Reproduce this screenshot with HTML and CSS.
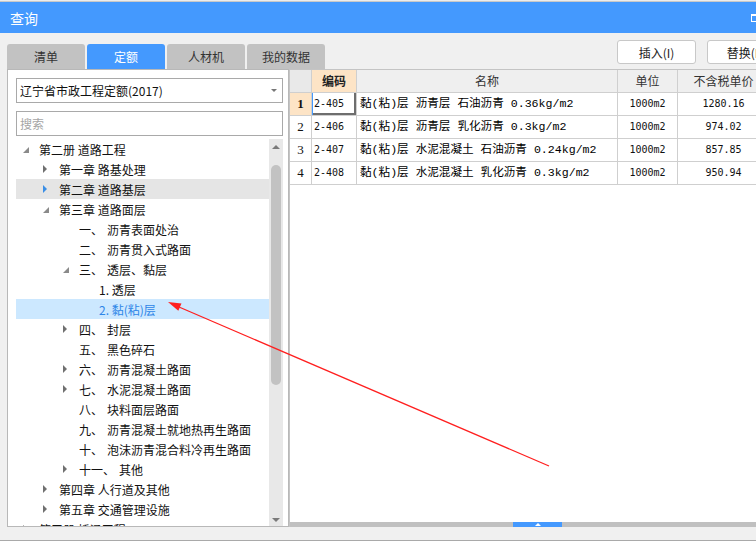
FILE: index.html
```html
<!DOCTYPE html>
<html lang="zh-CN">
<head>
<meta charset="utf-8">
<title>查询</title>
<link rel="stylesheet" href="styles.css">
</head>
<body>
<div class="app">
  <div class="topstrip"></div>
  <header class="titlebar"><span class="title">查询</span><span class="winbtn"></span></header>
  <div class="toprow">
    <nav class="tabs">
      <span class="tab">清单</span>
      <span class="tab active">定额</span>
      <span class="tab">人材机</span>
      <span class="tab">我的数据</span>
    </nav>
    <div class="toolbar">
      <button class="btn">插入(I)</button>
      <button class="btn">替换(R)</button>
    </div>
  </div>
  <div class="main">
    <aside class="panel">
      <div class="select"><span>辽宁省市政工程定额(2017)</span><span class="caret"></span></div>
      <div class="search">搜索</div>
      <div class="tree">
        <ul class="tree-list">
          <li class="node l0"><span class="tog open"></span>第二册 道路工程</li>
          <li class="node l1"><span class="tog closed"></span>第一章 路基处理</li>
          <li class="node l1 hover"><span class="tog closed"></span>第二章 道路基层</li>
          <li class="node l1"><span class="tog open"></span>第三章 道路面层</li>
          <li class="node l2"><span class="tog"></span><span class="num">一、</span>沥青表面处治</li>
          <li class="node l2"><span class="tog"></span><span class="num">二、</span>沥青贯入式路面</li>
          <li class="node l2"><span class="tog open"></span><span class="num">三、</span>透层、黏层</li>
          <li class="node l3"><span class="tog"></span>1. 透层</li>
          <li class="node l3 sel"><span class="tog"></span>2. 黏(粘)层</li>
          <li class="node l2"><span class="tog closed"></span><span class="num">四、</span>封层</li>
          <li class="node l2"><span class="tog"></span><span class="num">五、</span>黑色碎石</li>
          <li class="node l2"><span class="tog closed"></span><span class="num">六、</span>沥青混凝土路面</li>
          <li class="node l2"><span class="tog closed"></span><span class="num">七、</span>水泥混凝土路面</li>
          <li class="node l2"><span class="tog"></span><span class="num">八、</span>块料面层路面</li>
          <li class="node l2"><span class="tog"></span><span class="num">九、</span>沥青混凝土就地热再生路面</li>
          <li class="node l2"><span class="tog"></span><span class="num">十、</span>泡沫沥青混合料冷再生路面</li>
          <li class="node l2"><span class="tog closed"></span><span class="num">十一、</span>其他</li>
          <li class="node l1"><span class="tog closed"></span>第四章 人行道及其他</li>
          <li class="node l1"><span class="tog closed"></span>第五章 交通管理设施</li>
          <li class="node l0"><span class="tog closed"></span>第三册 桥涵工程</li>
        </ul>
        <div class="vscroll"><span class="arr up"></span><span class="thumb"></span><span class="arr down"></span></div>
      </div>
    </aside>
    <section class="gridpane">
      <div class="grid">
        <div class="gr head">
          <span></span><span class="key">编码</span><span>名称</span><span>单位</span><span>不含税单价</span>
        </div>
        <div class="gr">
          <span class="rn cur">1</span><span class="code focus">2-405</span><span class="name">黏(粘)层 沥青层 石油沥青 0.36kg/m2</span><span class="unit">1000m2</span><span class="price">1280.16</span>
        </div>
        <div class="gr">
          <span class="rn">2</span><span class="code">2-406</span><span class="name">黏(粘)层 沥青层 乳化沥青 0.3kg/m2</span><span class="unit">1000m2</span><span class="price">974.02</span>
        </div>
        <div class="gr">
          <span class="rn">3</span><span class="code">2-407</span><span class="name">黏(粘)层 水泥混凝土 石油沥青 0.24kg/m2</span><span class="unit">1000m2</span><span class="price">857.85</span>
        </div>
        <div class="gr">
          <span class="rn">4</span><span class="code">2-408</span><span class="name">黏(粘)层 水泥混凝土 乳化沥青 0.3kg/m2</span><span class="unit">1000m2</span><span class="price">950.94</span>
        </div>
      </div>
      <div class="spacer"></div>
      <div class="hscroll"><span class="grip"></span></div>
    </section>
  </div>
  <div class="footer"></div>
</div>
<svg class="annot" width="756" height="555" viewBox="0 0 756 555">
  <line x1="549" y1="466" x2="179" y2="307" stroke="#ff1f1f" stroke-width="1.2"/>
  <polygon points="168,302 178.3,310.8 181.5,303.4" fill="#ff1f1f"/>
</svg>
</body>
</html>
```

FILE: styles.css
```css
* { box-sizing: border-box; margin: 0; padding: 0; }
html, body { width: 756px; height: 555px; overflow: hidden; }
body {
  position: relative;
  background: #fff;
  font-family: "Noto Sans CJK SC", "Noto Sans", sans-serif;
  font-size: 12px;
  color: #111;
}
.app { width: 800px; background: #f0f0f0; border-bottom: 1px solid #a9a9a9; }
.topstrip { height: 2px; background: #c9c9c9; border-top: 1px solid #ececec; }
.titlebar {
  height: 31px;
  background: #4499fe;
  display: flex;
  align-items: center;
  color: #fff;
}
.title { font-size: 14px; padding-left: 10px; }
.winbtn {
  margin-left: auto;
  margin-right: 39px;
  width: 10px;
  height: 8px;
  border: 1px solid #fff;
  border-top-width: 2px;
}
.toprow { display: flex; height: 36px; }
.tabs { display: flex; gap: 2px; padding-left: 7px; align-self: flex-end; }
.tab {
  width: 78px;
  height: 25px;
  line-height: 25px;
  text-align: center;
  background: #c2c2c2;
  color: #333;
  border-radius: 3px 3px 0 0;
}
.tab.active { background: #4499fe; color: #fff; }
.toolbar { margin-left: auto; display: flex; gap: 11px; padding: 7px 14px 0 0; align-self: flex-start; }
.btn {
  width: 79px;
  height: 24px;
  background: #fff;
  border: 1px solid #c8c8c8;
  border-radius: 3px;
  font-family: inherit;
  font-size: 12px;
  color: #222;
}
.main { display: flex; height: 458px; padding-left: 7px; }
.panel {
  width: 282px;
  flex: none;
  background: #fff;
  border: 1px solid #b8b8b8;
  display: flex;
  flex-direction: column;
  padding: 8px 5px 0 8px;
}
.select {
  height: 25px;
  flex: none;
  border: 1px solid #a9a9a9;
  display: flex;
  align-items: center;
  justify-content: space-between;
  padding: 0 5px 0 3px;
}
.caret {
  border-left: 3px solid transparent;
  border-right: 3px solid transparent;
  border-top: 3px solid #777;
}
.search {
  margin-top: 8px;
  height: 25px;
  flex: none;
  border: 1px solid #a9a9a9;
  line-height: 23px;
  padding-left: 3px;
  color: #a5a5a5;
}
.tree { margin-top: 3px; flex: 1; min-height: 0; display: flex; }
.tree-list { flex: 1; list-style: none; overflow: hidden; }
.node { height: 20px; display: flex; align-items: center; white-space: nowrap; }
.l0 { padding-left: 3px; }
.l1 { padding-left: 23px; }
.l2 { padding-left: 43px; }
.l3 { padding-left: 63px; }
.tog { width: 20px; height: 20px; flex: none; display: flex; align-items: center; padding-left: 4px; }
.tog.closed::before {
  content: "";
  border-left: 4px solid #707070;
  border-top: 4px solid transparent;
  border-bottom: 4px solid transparent;
}
.tog.open::before {
  content: "";
  margin-top: 1px;
  border-left: 6px solid transparent;
  border-bottom: 6px solid #8a8a8a;
}
.num { margin-right: 4px; }
.node.hover { background: #e5e5e5; }
.node.hover .tog.closed::before { border-left-color: #3a8ee6; }
.node.sel { background: #cce8ff; color: #2e86e8; }
.vscroll {
  width: 14px;
  flex: none;
  background: #e8e8e8;
  display: flex;
  flex-direction: column;
  align-items: center;
}
.arr.up {
  margin-top: 6px;
  border-left: 4px solid transparent;
  border-right: 4px solid transparent;
  border-bottom: 4px solid #7a7a7a;
}
.thumb { width: 10px; height: 220px; margin-top: 16px; background: #c2c2c2; border-radius: 5px; }
.arr.down {
  margin-top: auto;
  margin-bottom: 4px;
  border-left: 4px solid transparent;
  border-right: 4px solid transparent;
  border-top: 4px solid #7a7a7a;
}
.gridpane {
  flex: 1;
  background: #fff;
  border-top: 1px solid #c4c4c4;
  border-left: 1px solid #c4c4c4;
  display: flex;
  flex-direction: column;
  overflow: hidden;
}
.gr { display: grid; grid-template-columns: 22px 45px 261px 60px 92px; height: 23px; }
.gr > span {
  border-right: 1px solid #cfcfcf;
  border-bottom: 1px solid #cfcfcf;
  line-height: 22px;
  overflow: hidden;
  white-space: nowrap;
}
.gr.head > span { background: #efefef; text-align: center; color: #333; }
.gr.head > span:first-child { background: #e9e9e9; }
.gr.head > .key { background: #fde4c6; font-weight: bold; color: #222; }
.rn { font-family: "Liberation Serif", serif; font-size: 13px; text-align: center; }
.rn.cur { background: #fde4c6; font-weight: bold; }
.code { font-family: "DejaVu Sans Mono", monospace; font-size: 10px; padding-left: 2px; }
.code.focus { box-shadow: inset 1px 0 0 #4499fe, inset -2px -2px 0 #6e6e6e; }
.name { font-family: "Liberation Mono", "Noto Sans CJK SC", monospace; font-size: 11.6px; padding-left: 3px; color: #000; }
.unit, .price { font-family: "DejaVu Sans Mono", monospace; font-size: 10px; text-align: center; }
.spacer { flex: 1; }
.hscroll { height: 5px; flex: none; background: #c0c0c0; }
.grip {
  display: flex;
  justify-content: center;
  align-items: flex-end;
  margin-left: 223px;
  width: 49px;
  height: 5px;
  background: #4499fe;
  padding-bottom: 1px;
}
.grip::after {
  content: "";
  border-left: 3px solid transparent;
  border-right: 3px solid transparent;
  border-bottom: 3px solid #fff;
}
.footer { height: 13px; }
.annot { position: absolute; top: 0; left: 0; pointer-events: none; }
```
